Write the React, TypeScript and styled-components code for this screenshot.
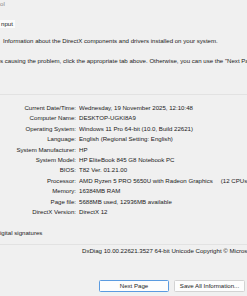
import React from "react"
import styled, { createGlobalStyle } from "styled-components"

const GlobalStyle = createGlobalStyle`
  html, body {
    margin: 0;
    padding: 0;
    background: #f0f0f0;
    overflow: hidden;
  }
`

const Window = styled.div`
  width: 247px;
  height: 296px;
  overflow: hidden;
  background: #f0f0f0;
  font-family: "Liberation Sans", Arial, sans-serif;
  font-size: 6.1px;
  color: #1a1a1a;
  display: flex;
  flex-direction: column;
  white-space: nowrap;
`

const Title = styled.div`
  height: 8px;
  line-height: 8px;
  color: #8a8a8a;
`

const TabStrip = styled.div`
  margin-top: 12px;
  height: 8px;
  display: flex;
`

const Tab = styled.div`
  background: #fbfbfb;
  line-height: 8px;
  padding: 0 2px 0 1px;
`

const Line = styled.div<{ $top: number; $left?: number }>`
  margin-top: ${(p) => p.$top}px;
  padding-left: ${(p) => p.$left ?? 0}px;
  height: 8px;
  line-height: 8px;
  overflow: hidden;
`

const Separator = styled.div<{ $top: number }>`
  margin-top: ${(p) => p.$top}px;
  height: 1px;
  background: #e2e2e2;
`

const InfoGrid = styled.div`
  margin-top: 8px;
  display: grid;
  grid-template-columns: 76px auto;
  column-gap: 3px;
  grid-auto-rows: 10.4px;
  line-height: 10.4px;
`

const Label = styled.span`
  text-align: right;
`

const Value = styled.span`
  overflow: hidden;
`

const Gap = styled.span`
  display: inline-block;
  width: 8px;
`

const ButtonRow = styled.div`
  margin-top: 25px;
  padding-left: 99px;
  display: flex;
  gap: 5px;
`

const Button = styled.div<{ $primary?: boolean; $w: number }>`
  box-sizing: border-box;
  width: ${(p) => p.$w}px;
  height: 12px;
  line-height: 10px;
  text-align: center;
  background: #fdfdfd;
  border: 1px solid ${(p) => (p.$primary ? "#5b9be0" : "#d3d3d3")};
  border-radius: 1.5px;
  flex-shrink: 0;
`

const rows: [string, React.ReactNode][] = [
  ["Current Date/Time:", "Wednesday, 19 November 2025, 12:10:48"],
  ["Computer Name:", "DESKTOP-UGKI8A9"],
  ["Operating System:", "Windows 11 Pro 64-bit (10.0, Build 22621)"],
  ["Language:", "English (Regional Setting: English)"],
  ["System Manufacturer:", "HP"],
  ["System Model:", "HP EliteBook 845 G8 Notebook PC"],
  ["BIOS:", "T82 Ver. 01.21.00"],
  [
    "Processor:",
    <>
      AMD Ryzen 5 PRO 5650U with Radeon Graphics
      <Gap />
      (12 CPUs), ~2.3GHz
    </>,
  ],
  ["Memory:", "16384MB RAM"],
  ["Page file:", "5688MB used, 12936MB available"],
  ["DirectX Version:", "DirectX 12"],
]

const App = () => {
  return (
    <Window>
      <GlobalStyle />
      <Title>ol</Title>
      <TabStrip>
        <Tab>nput</Tab>
      </TabStrip>
      <Line $top={9} $left={3}>
        Information about the DirectX components and drivers installed on your system.
      </Line>
      <Line $top={12}>
        s causing the problem, click the appropriate tab above. Otherwise, you can use the "Next Page" button below to visit each page in sequence.
      </Line>
      <Separator $top={29} />
      <InfoGrid>
        {rows.map(([label, value]) => (
          <React.Fragment key={label}>
            <Label>{label}</Label>
            <Value>{value}</Value>
          </React.Fragment>
        ))}
      </InfoGrid>
      <Line $top={12}>igital signatures</Line>
      <Separator $top={7} />
      <Line $top={2} $left={82}>
        DxDiag 10.00.22621.3527 64-bit Unicode  Copyright © Microsoft. All rights reserved.
      </Line>
      <ButtonRow>
        <Button $primary $w={70}>Next Page</Button>
        <Button $w={71}>Save All Information...</Button>
      </ButtonRow>
    </Window>
  )
}

export default App
